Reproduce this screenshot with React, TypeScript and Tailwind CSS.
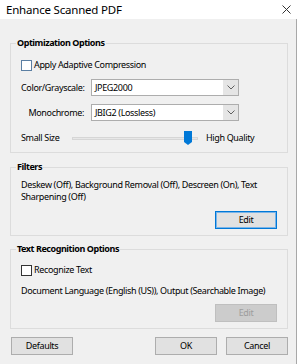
import React from "react";

function Chevron() {
    return (
        <svg width="8" height="5" viewBox="0 0 8 5" className="text-[#606060]">
            <path d="M0.5 0.5 L4 4 L7.5 0.5" fill="none" stroke="currentColor" strokeWidth="1" />
        </svg>
    );
}

function Combo({ value }: { value: string }) {
    return (
        <div className="w-[148px] h-[17px] flex bg-white border border-[#adadad]">
            <div className="flex-1 flex items-center pl-[3px]">{value}</div>
            <div className="w-[15px] h-full flex items-center justify-center bg-[#e5e5e5]">
                <Chevron />
            </div>
        </div>
    );
}

function Checkbox({ label, tint }: { label: string; tint?: boolean }) {
    return (
        <div className="flex items-center h-[14px] pl-[10px]">
            <div
                className={
                    tint
                        ? "w-[11px] h-[11px] bg-white border border-[#5b7fa3]"
                        : "w-[11px] h-[11px] bg-white border border-[#333333]"
                }
            />
            <span className="ml-[2px]">{label}</span>
        </div>
    );
}

function Group({ title, className, children }: { title: string; className: string; children: React.ReactNode }) {
    return (
        <div className={"flex flex-col border border-[#dcdcdc] " + className}>
            <div className="-mt-[8px] ml-[5px] px-[1px] w-fit h-[14px] leading-[14px] font-bold tracking-[-0.45px] bg-[#f0f0f0]">
                {title}
            </div>
            {children}
        </div>
    );
}

function Button({ label, kind }: { label: string; kind?: "focus" | "disabled" }) {
    let cls = "w-[62px] h-[18px] flex items-center justify-center border ";
    if (kind === "focus") cls += "bg-[#e1e1e1] border-[#0078d7] shadow-[inset_0_0_0_1px_#7ab4e8]";
    else if (kind === "disabled") cls += "bg-[#cccccc] border-[#bfbfbf] text-[#9d9d9d]";
    else cls += "bg-[#e1e1e1] border-[#adadad]";
    return <div className={cls}>{label}</div>;
}

export default function App() {
    return (
        <div className="w-[300px] h-[364px] flex flex-col text-[9px] tracking-[-0.35px] text-black font-['Noto_Sans',sans-serif] overflow-hidden">
            <div className="h-[19px] flex items-center justify-between bg-white pl-[6px] pr-[9px]">
                <span className="text-[11.5px] tracking-[-0.2px]">Enhance Scanned PDF</span>
                <svg width="9" height="9" viewBox="0 0 9 9">
                    <path d="M0.5 0.5 L8.5 8.5 M8.5 0.5 L0.5 8.5" stroke="#333" strokeWidth="1" />
                </svg>
            </div>
            <div className="flex-1 flex">
                <div className="w-[296px] bg-[#f0f0f0] flex flex-col pl-[10px] pr-[8px] pt-[24px]">
                    <Group title="Optimization Options" className="h-[110px]">
                        <div className="mt-[8px]">
                            <Checkbox label="Apply Adaptive Compression" tint />
                        </div>
                        <div className="mt-[7px] flex items-center pl-[10px]">
                            <div className="w-[63px] text-right">Color/Grayscale:</div>
                            <div className="ml-[7px]">
                                <Combo value="JPEG2000" />
                            </div>
                        </div>
                        <div className="mt-[8px] flex items-center pl-[10px]">
                            <div className="w-[63px] text-right">Monochrome:</div>
                            <div className="ml-[7px]">
                                <Combo value="JBIG2 (Lossless)" />
                            </div>
                        </div>
                        <div className="mt-[9px] flex items-center h-[16px] pl-[10px]">
                            <div className="w-[51px]">Small Size</div>
                            <div className="relative w-[126px] h-[16px] flex items-center">
                                <div className="w-full h-[3px] bg-[#e7e7e7] border border-[#d6d6d6]" />
                                <svg
                                    width="8"
                                    height="14"
                                    viewBox="0 0 8 14"
                                    className="absolute left-[112px] top-[1px]"
                                >
                                    <path d="M0 0 H8 V11 L4 14 L0 11 Z" fill="#0078d7" />
                                </svg>
                            </div>
                            <div className="ml-[8px]">High Quality</div>
                        </div>
                    </Group>

                    <Group title="Filters" className="mt-[14px] h-[69px]">
                        <div className="mt-[5px] pl-[10px] leading-[12px]">
                            Deskew (Off), Background Removal (Off), Descreen (On), Text
                            <br />
                            Sharpening (Off)
                        </div>
                        <div className="mt-[8px] flex justify-end pr-[10px]">
                            <Button label="Edit" kind="focus" />
                        </div>
                    </Group>

                    <Group title="Text Recognition Options" className="mt-[13px] h-[80px]">
                        <div className="mt-[7px]">
                            <Checkbox label="Recognize Text" />
                        </div>
                        <div className="mt-[8px] pl-[10px] h-[12px] leading-[12px]">
                            Document Language (English (US)), Output (Searchable Image)
                        </div>
                        <div className="mt-[7px] flex justify-end pr-[10px]">
                            <Button label="Edit" kind="disabled" />
                        </div>
                    </Group>

                    <div className="mt-[8px] flex items-center">
                        <div className="ml-[1px]">
                            <Button label="Defaults" />
                        </div>
                        <div className="ml-auto flex gap-[9px]">
                            <Button label="OK" />
                            <Button label="Cancel" />
                        </div>
                    </div>
                </div>
                <div className="w-[1px] bg-[#a8a8a8]" />
                <div className="flex-1 bg-white" />
            </div>
        </div>
    );
}
